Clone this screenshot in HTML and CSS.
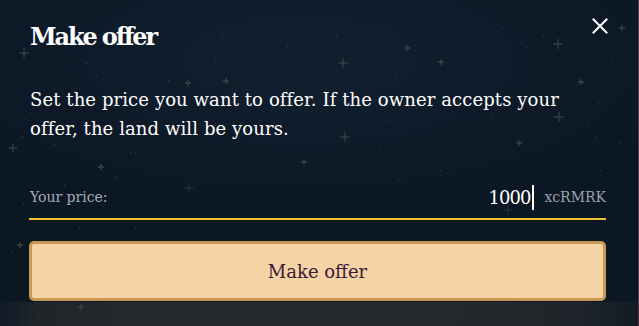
FILE: index.html
```html
<!DOCTYPE html>
<html lang="en">
<head>
<meta charset="utf-8">
<title>Make offer</title>
<link rel="stylesheet" href="styles.css">
</head>
<body>
<div class="screen">
  <svg class="stars" width="639" height="326" viewBox="0 0 639 326" aria-hidden="true">
    <g stroke="#3f4a44" stroke-width="1">
      <path d="M19 53h10M24 48v10"/>
      <path d="M338 63h10M343 58v10"/>
      <path d="M553 44h10M558 39v10"/>
      <path d="M554 117h10M559 112v10"/>
      <path d="M340 137h10M345 132v10"/>
      <path d="M9 148h8M13 144v8"/>
      <path d="M184 188h10M189 183v10" stroke="#25303a"/>
      <path d="M503 210h10M508 205v10" stroke="#25303a"/>
    </g>
    <g stroke="#3a4440" stroke-width="1.4">
      <path d="M185 83h6M188 80v6"/>
      <path d="M223 81h6M226 78v6"/>
      <path d="M404 48h6M407 45v6"/>
      <path d="M438 62h6M441 59v6"/>
      <path d="M578 82h6M581 79v6"/>
      <path d="M516 143h6M519 140v6"/>
      <path d="M619 28h6M622 25v6"/>
      <path d="M98 167h6M101 164v6"/>
      <path d="M301 162h6M304 159v6"/>
      <path d="M17 245h6M20 242v6"/>
      <path d="M78 307h6M81 304v6"/>
    </g>
    <g fill="#3a4550">
      <rect x="222" y="34" width="1" height="1"/>
      <rect x="287" y="46" width="1" height="1"/>
      <rect x="86" y="63" width="1" height="1"/>
      <rect x="215" y="61" width="1" height="1"/>
      <rect x="96" y="75" width="1" height="1"/>
      <rect x="37" y="75" width="1" height="1"/>
      <rect x="168" y="80" width="1" height="1"/>
      <rect x="253" y="78" width="1" height="1"/>
      <rect x="289" y="27" width="1" height="1"/>
      <rect x="336" y="35" width="1" height="1"/>
      <rect x="389" y="29" width="1" height="1"/>
      <rect x="502" y="27" width="1" height="1"/>
      <rect x="543" y="35" width="1" height="1"/>
      <rect x="526" y="47" width="1" height="1"/>
      <rect x="611" y="58" width="1" height="1"/>
      <rect x="396" y="78" width="1" height="1"/>
      <rect x="502" y="82" width="1" height="1"/>
      <rect x="598" y="102" width="1" height="1"/>
      <rect x="587" y="126" width="1" height="1"/>
      <rect x="595" y="137" width="1" height="1"/>
      <rect x="620" y="143" width="1" height="1"/>
      <rect x="386" y="120" width="1" height="1"/>
      <rect x="421" y="116" width="1" height="1"/>
      <rect x="492" y="116" width="1" height="1"/>
      <rect x="25" y="118" width="1" height="1"/>
      <rect x="22" y="136" width="1" height="1"/>
      <rect x="54" y="144" width="1" height="1"/>
      <rect x="93" y="145" width="1" height="1"/>
      <rect x="131" y="152" width="1" height="1"/>
      <rect x="240" y="123" width="1" height="1"/>
      <rect x="135" y="153" width="1" height="1"/>
      <rect x="33" y="165" width="1" height="1"/>
      <rect x="64" y="185" width="1" height="1"/>
      <rect x="115" y="176" width="1" height="1"/>
      <rect x="23" y="203" width="1" height="1"/>
      <rect x="79" y="227" width="1" height="1"/>
      <rect x="135" y="227" width="1" height="1"/>
      <rect x="12" y="252" width="1" height="1"/>
      <rect x="36" y="318" width="1" height="1"/>
      <rect x="60" y="315" width="1" height="1"/>
      <rect x="21" y="322" width="1" height="1"/>
      <rect x="398" y="180" width="1" height="1"/>
      <rect x="440" y="170" width="1" height="1"/>
      <rect x="600" y="170" width="1" height="1"/>
      <rect x="380" y="150" width="1" height="1"/>
    </g>
  </svg>

  <div class="modal">
    <header class="modal-head">
      <h1 class="title">Make offer</h1>
      <button class="close" type="button" aria-label="Close">
        <svg width="16" height="16" viewBox="0 0 16 16"><path d="M1.5 1.5l13 13M14.5 1.5l-13 13" stroke="#ffffff" stroke-width="2" fill="none" stroke-linecap="square"/></svg>
      </button>
    </header>
    <p class="desc">Set the price you want to offer. If the owner accepts your offer, the land will be yours.</p>
    <label class="price-field">
      <span class="price-label">Your price:</span>
      <span class="price-value"><span class="amount">1000</span><span class="caret"></span></span>
      <span class="unit">xcRMRK</span>
    </label>
    <button class="submit" type="button">Make offer</button>
  </div>
  <div class="backdrop-bottom"></div>
</div>
</body>
</html>
```

FILE: styles.css
```css
html, body {
  margin: 0;
  padding: 0;
}
body {
  width: 639px;
  height: 326px;
  overflow: hidden;
  background: #0d1926;
  font-family: "DejaVu Serif", "Liberation Serif", serif;
}
.screen {
  position: relative;
  width: 639px;
  height: 326px;
  background: radial-gradient(ellipse 420px 160px at 300px 60px, #112030 0%, #0e1a28 60%, #0c1724 100%);
  border-right: 1px solid #4a3a48;
  box-sizing: border-box;
  display: flex;
  flex-direction: column;
}
.stars {
  position: absolute;
  left: 0;
  top: 0;
}
.modal {
  position: relative;
  padding: 0 32px 0 29px;
  flex: 1;
  display: flex;
  flex-direction: column;
}
.modal-head {
  display: flex;
  justify-content: space-between;
  align-items: flex-start;
  height: 58px;
}
.title {
  margin: 21px 0 0 1px;
  font-size: 24px;
  line-height: 32px;
  font-weight: 700;
  letter-spacing: -2.1px;
  color: #ffffff;
}
.close {
  margin: 18px -2px 0 0;
  padding: 0;
  border: 0;
  background: none;
  width: 16px;
  height: 16px;
  display: flex;
}
.desc {
  margin: 27px 0 0 1px;
  max-width: 545px;
  font-size: 18px;
  line-height: 29px;
  letter-spacing: 0.1px;
  color: #ffffff;
}
.price-field {
  margin-top: 37px;
  display: flex;
  align-items: center;
  height: 34px;
  border-bottom: 2px solid #f2c12e;
  padding: 0 0 4px 1px;
  box-sizing: content-box;
}
.price-label {
  flex: 1;
  font-size: 14px;
  color: #a3acb8;
}
.price-value {
  display: flex;
  align-items: center;
}
.amount {
  font-size: 18px;
  letter-spacing: -1px;
  color: #ffffff;
}
.caret {
  width: 2px;
  height: 25px;
  background: #ffffff;
  margin-left: 2px;
}
.unit {
  margin-left: 10px;
  font-size: 14px;
  color: #98a1ab;
}
.submit {
  margin-top: 21px;
  height: 60px;
  border: 3px solid #c79955;
  border-radius: 5px;
  background: #f5d3a5;
  color: #3b1a3b;
  font-family: "DejaVu Serif", "Liberation Serif", serif;
  font-size: 18px;
}
.backdrop-bottom {
  height: 24px;
  background: linear-gradient(90deg, #0f1a25 0%, #1f252a 6%, #25292c 20%, #23282c 80%, #1d2329 92%, #121b25 100%);
}
```
